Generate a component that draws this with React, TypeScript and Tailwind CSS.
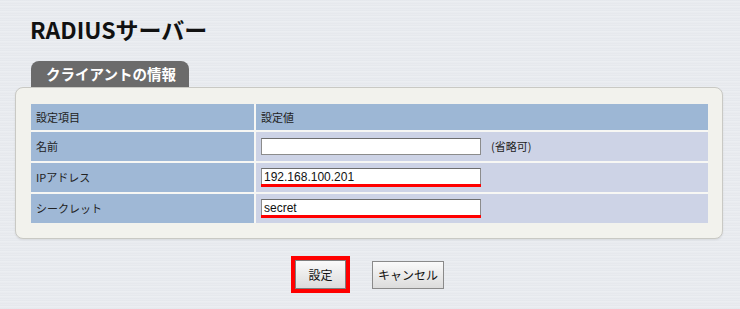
import React from "react";

const jp = "font-['Noto_Sans_CJK_JP','Noto_Sans',sans-serif]";

interface RowProps {
  label: string;
  children?: React.ReactNode;
}

const Row = ({ label, children }: RowProps) => (
  <>
    <div className="flex h-[29px] items-center bg-[#9fb8d6] pl-[5px] text-[11px] text-[#222]">
      {label}
    </div>
    <div className="flex h-[29px] items-center bg-[#cdd3e6] pl-[5px] text-[11px] text-[#222]">
      {children}
    </div>
  </>
);

const TextBox = ({ value, marked }: { value?: string; marked?: boolean }) => (
  <div className="flex flex-col">
    <div className="flex h-[17px] w-[220px] items-center border border-[#8c8c8c] border-t-[#6e6e6e] bg-white pl-[2px] font-['Liberation_Sans',Arial,sans-serif] text-[12px] leading-none text-[#111]">
      {value}
    </div>
    {marked && <div className="-mt-[1px] h-[3px] w-[220px] bg-[#ff0000]" />}
  </div>
);

export default function App() {
  return (
    <div
      className={`${jp} flex h-[309px] w-[740px] flex-col overflow-hidden bg-[#e6e9ee] bg-[repeating-linear-gradient(180deg,#e2e5ea_0px,#e9ecf0_1px,#eef0f3_2px,#e4e7ec_3px,#ebedf1_5px)]`}
    >
      {/* Title */}
      <h1 className="pl-[30px] pt-[16px] text-[23px] font-bold leading-[26px] text-[#111]">
        RADIUSサーバー
      </h1>

      {/* Tab */}
      <div className="mt-[19px] flex pl-[31px]">
        <div className="flex h-[26px] w-[158px] items-center rounded-t-[8px] bg-[#6b6b6b] pl-[15px] text-[14.5px] font-bold text-white">
          クライアントの情報
        </div>
      </div>

      {/* Panel */}
      <div className="mx-[15px] w-[708px] rounded-[8px] border border-[#c9c9c4] bg-[#f2f2ed] pb-[15px] pl-[15px] pr-[14px] pt-[16px] shadow-[0_1px_2px_rgba(0,0,0,0.08)]">
        <div className="grid grid-cols-[223px_1fr] gap-x-[2px] gap-y-[2px] bg-[#f7f7f4]">
          <div className="flex h-[26px] items-center bg-[#9db7d5] pl-[5px] text-[11px] text-[#222]">設定項目</div>
          <div className="flex h-[26px] items-center bg-[#9db7d5] pl-[5px] text-[11px] text-[#222]">設定値</div>
          <Row label="名前">
            <TextBox />
            <span className="ml-[10px]">(省略可)</span>
          </Row>
          <Row label="IPアドレス">
            <TextBox value="192.168.100.201" marked />
          </Row>
          <Row label="シークレット">
            <TextBox value="secret" marked />
          </Row>
        </div>
      </div>

      {/* Buttons */}
      <div className="mt-[17px] flex items-center pl-[291px]">
        <div className="border-[4px] border-[#ff0000]">
          <button className="flex h-[29px] w-[51px] items-center justify-center border border-[#7e7e7e] bg-gradient-to-b from-[#fafafa] to-[#dcdcdc] text-[12px] text-[#111]">
            設定
          </button>
        </div>
        <button className="ml-[22px] flex h-[28px] w-[72px] items-center justify-center border border-[#8a8a8a] bg-gradient-to-b from-[#fafafa] to-[#dcdcdc] text-[12px] text-[#111]">
          キャンセル
        </button>
      </div>
    </div>
  );
}
